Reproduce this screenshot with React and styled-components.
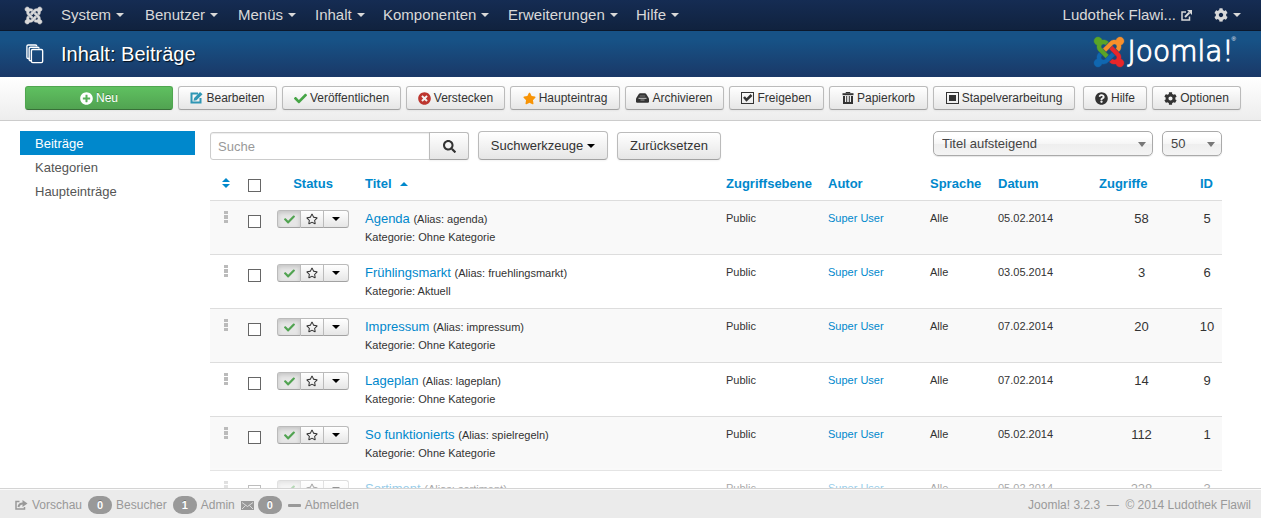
import React from "react";
import styled, { createGlobalStyle, css } from "styled-components";
import {
  FaCheck,
  FaCog,
  FaPlusCircle,
  FaQuestionCircle,
  FaRegStar,
  FaSearch,
  FaStar,
  FaTimesCircle,
} from "react-icons/fa";

const GlobalStyle = createGlobalStyle`
  *, *::before, *::after { box-sizing: border-box; }
  body {
    margin: 0;
    font: 13px/18px "Liberation Sans", Arial, sans-serif;
    color: #333;
    background: #fff;
  }
  a { color: #08c; text-decoration: none; }
  button, input, select { font: inherit; color: inherit; margin: 0; }
  svg { display: block; flex: none; }
`;

const Shell = styled.div`
  display: flex;
  flex-direction: column;
  height: 100vh;
`;

/* ---------- top navigation ---------- */

const NavBar = styled.nav`
  display: flex;
  align-items: center;
  flex: none;
  height: 31px;
  padding: 0 20px 0 25px;
  background: linear-gradient(#152c53, #10223e);
  border-bottom: 1px solid #0b182c;
  font-size: 15px;
  color: #d9d9d9;
`;

const NavHome = styled.a`
  display: flex;
  width: 36px;
  color: #d9d9d9;
`;

const NavItem = styled.a`
  display: flex;
  align-items: center;
  flex: 0 0 ${(p) => p.$width}px;
  gap: 5px;
  color: #d9d9d9;
  white-space: nowrap;
`;

const NavRight = styled.div`
  display: flex;
  align-items: center;
  gap: 22px;
  margin-left: auto;
`;

const NavLink = styled.a`
  display: flex;
  align-items: center;
  gap: 5px;
  color: #d9d9d9;
  white-space: nowrap;
`;

const Caret = styled.span`
  flex: none;
  border: 4px solid transparent;
  border-top-color: currentColor;
  border-bottom: 0;
`;

/* ---------- page header ---------- */

const Header = styled.header`
  display: flex;
  align-items: center;
  justify-content: space-between;
  flex: none;
  height: 46px;
  padding: 0 25px 0 26px;
  background: linear-gradient(#175286 20%, #1a3867);
  color: #fff;
`;

const PageTitle = styled.h1`
  display: flex;
  align-items: center;
  gap: 17px;
  margin: 0;
  font-size: 20px;
  font-weight: 400;
  line-height: 24px;
  text-shadow: 1px 1px 1px rgba(0, 0, 0, 0.8);
`;

const Brand = styled.div`
  display: flex;
  align-items: center;
  gap: 4px;
  height: 40px;
  padding-bottom: 5px;
  font: 200 28px/30px "DejaVu Sans Light", "DejaVu Sans", sans-serif;
  -webkit-text-stroke: 1px #fff;
`;

const Registered = styled.sup`
  align-self: flex-start;
  margin-left: -6px;
  font: 6px/10px "Liberation Sans", sans-serif;
  -webkit-text-stroke: 0;
`;

/* ---------- toolbar ---------- */

const Toolbar = styled.div`
  display: flex;
  align-items: center;
  flex: none;
  gap: 5px;
  height: 44px;
  padding: 0 20px 1px 25px;
  background: linear-gradient(#fff, #ededed);
  border-bottom: 1px solid #ccc;
`;

const buttonFace = css`
  display: flex;
  align-items: center;
  justify-content: center;
  padding: 0;
  color: #333;
  background: linear-gradient(#fff, #e6e6e6);
  border: 1px solid #bbb;
  border-bottom-color: #a2a2a2;
  white-space: nowrap;
`;

const ToolButton = styled.button`
  ${buttonFace}
  flex: 0 0 ${(p) => p.$width}px;
  gap: 3px;
  height: 24px;
  font-size: 12px;
  border-radius: 3px;
  box-shadow: 0 1px 2px rgba(0, 0, 0, 0.05);
  margin-left: ${(p) => (p.$apart ? 3 : 0)}px;
  ${(p) =>
    p.$primary &&
    css`
      color: #fff;
      background: linear-gradient(#5fc060, #51a351);
      border-color: #4fa64f #4fa64f #387038;
      text-shadow: 0 -1px 0 rgba(0, 0, 0, 0.25);
    `}
  svg { color: ${(p) => p.$icon}; }
`;

/* ---------- body ---------- */

const Main = styled.main`
  display: flex;
  align-items: flex-start;
  flex: 1;
  gap: 15px;
  min-height: 0;
  overflow: auto;
  scrollbar-width: none;
  padding: 10px 39px 0 20px;
`;

const SideMenu = styled.nav`
  display: flex;
  flex-direction: column;
  flex: 0 0 175px;
`;

const SideLink = styled.a`
  padding: 4px 15px 2px;
  color: ${(p) => (p.$active ? "#fff" : "#555")};
  background: ${(p) => (p.$active ? "#08c" : "transparent")};
`;

const Content = styled.section`
  flex: 1;
  min-width: 0;
`;

const Filters = styled.form`
  display: flex;
  align-items: flex-start;
  gap: 9px;
  height: 29px;
  margin-bottom: 6px;
`;

const SearchGroup = styled.div`
  display: flex;
  align-self: flex-end;
`;

const SearchInput = styled.input`
  width: 220px;
  height: 28px;
  padding: 0 7px;
  border: 1px solid #ccc;
  border-radius: 3px 0 0 3px;
  box-shadow: inset 0 1px 1px rgba(0, 0, 0, 0.075);
  background: #fff;
  &::placeholder { color: #999; }
`;

const FilterButton = styled.button`
  ${buttonFace}
  align-self: flex-end;
  gap: 4px;
  width: ${(p) => p.$width}px;
  height: ${(p) => (p.$tall ? 29 : 28)}px;
  border-radius: ${(p) => (p.$attached ? "0 3px 3px 0" : "4px")};
  margin-left: ${(p) => (p.$attached ? -1 : 0)}px;
  box-shadow: 0 1px 2px rgba(0, 0, 0, 0.05);
`;

const CaretDark = styled(Caret)`
  color: #000;
`;

const Picker = styled.div`
  position: relative;
  width: ${(p) => p.$width}px;
  margin-left: ${(p) => (p.$push ? "auto" : "0")};
`;

const PickerSelect = styled.select`
  appearance: none;
  display: block;
  width: 100%;
  height: 25px;
  padding: 1px 8px 0;
  color: #444;
  border: 1px solid #aaa;
  border-radius: 5px;
  background: linear-gradient(#fff 20%, #f6f6f6 50%, #eee 52%, #f4f4f4);
  box-shadow: 0 1px 1px rgba(0, 0, 0, 0.1);
`;

const PickerCaret = styled(Caret)`
  position: absolute;
  top: 11px;
  right: 7px;
  color: #777;
  border-width: 5px 4px 0;
  pointer-events: none;
`;

/* ---------- article table ---------- */

const Table = styled.table`
  width: 100%;
  table-layout: fixed;
  border-collapse: separate;
  border-spacing: 0;
`;

const Col = styled.col`
  width: ${(p) => (p.$width ? `${p.$width}px` : "auto")};
`;

const Th = styled.th`
  padding: 8px 8px 6px;
  height: 34px;
  color: #08c;
  line-height: 20px;
  text-align: ${(p) => (p.$center ? "center" : "left")};
  vertical-align: top;
  white-space: nowrap;
`;

const Td = styled.td`
  padding: ${(p) => (p.$small ? "8px" : "9px")} ${(p) => (p.$center ? 0 : 8)}px 6px;
  height: 54px;
  border-top: 1px solid #ddd;
  text-align: ${(p) => (p.$center ? "center" : "left")};
  vertical-align: top;
  font-size: ${(p) => (p.$small ? 11 : 13)}px;
`;

const Row = styled.tr`
  &:nth-child(odd) ${Td} { background: #f9f9f9; }
`;

const SortLink = styled.a`
  display: inline-flex;
  align-items: center;
  gap: 8px;
`;

const SortUp = styled.span`
  border: 4px solid transparent;
  border-bottom-color: #08c;
  border-top: 0;
`;

const CenterIcon = styled.span`
  display: flex;
  justify-content: center;
  padding-top: ${(p) => p.$top}px;
`;

const Tick = styled.input`
  appearance: none;
  display: block;
  width: 13px;
  height: 13px;
  border: 1px solid #666;
  background: #fff;
  && { margin: 5px 0 0 -2px; }
`;

const StatusGroup = styled.div`
  display: flex;
  width: 72px;
`;

const StatusButton = styled.button`
  ${buttonFace}
  flex: 0 0 ${(p) => p.$width}px;
  height: 18px;
  & + & { border-left: 0; }
  &:first-child { border-radius: 3px 0 0 3px; }
  &:last-child { border-radius: 0 3px 3px 0; }
  ${(p) =>
    p.$pressed &&
    css`
      color: #51a351;
      background: #e6e6e6;
      box-shadow: inset 0 2px 4px rgba(0, 0, 0, 0.15);
    `}
`;

const Alias = styled.span`
  font-size: 11px;
`;

const Category = styled.div`
  font-size: 11px;
`;

/* ---------- status bar ---------- */

const StatusBar = styled.footer`
  position: relative;
  display: flex;
  align-items: center;
  flex: none;
  height: 30px;
  padding: 3px 10px 0 15px;
  font-size: 12px;
  color: #999;
  background: #ebebeb;
  border-top: 1px solid #d4d4d4;
  box-shadow: inset 0 1px 0 rgba(255, 255, 255, 0.8),
    0 -15px 15px rgba(255, 255, 255, 0.6);
  white-space: nowrap;
`;

const StatusItem = styled.span`
  display: flex;
  align-items: center;
  gap: 4px;
  margin-right: 6px;
`;

const StatusLink = styled(StatusItem)`
  color: #999;
`;

const Badge = styled.span`
  width: 24px;
  height: 18px;
  border-radius: 9px;
  background: #999;
  color: #fff;
  font-weight: 700;
  font-size: 11px;
  text-align: center;
  text-shadow: 0 -1px 0 rgba(0, 0, 0, 0.25);
`;

const Copyright = styled.span`
  margin-left: auto;
`;

/* ---------- drawings ---------- */

const ARM =
  "M16.719 14.759L14.22 17.26l-2.37 2.37-.462.466c-1.368 1.365-3.297 1.83-5.047 1.397-.327 1.424-1.604 2.49-3.13 2.49C1.438 23.983 0 22.547 0 20.772c0-1.518 1.055-2.789 2.469-3.123-.446-1.76.016-3.705 1.396-5.08l.179-.18 2.37 2.37-.184.181c-.769.779-.769 2.024 0 2.789.771.78 2.022.78 2.787 0l.465-.465 2.367-2.371 2.502-2.506z";

function JoomlaMark({ size, colors, weight }) {
  return (
    <svg width={size} height={size} viewBox="0 0 24 24" strokeWidth={weight} overflow="visible" aria-hidden="true">
      {colors.map((c, i) => (
        <path key={i} d={ARM} fill={c} stroke={c} transform={`rotate(${i * 90} 12 12)`} />
      ))}
    </svg>
  );
}

const StackIcon = () => (
  <svg width="18" height="20" viewBox="0 0 20 22" fill="none" stroke="#fff" strokeWidth="1.500">
    <path d="M4 16H2.500Q1 16 1 14.500V2.500Q1 1 2.500 1H10.500Q12 1 12 2.500" />
    <path d="M6 18.500H5Q3.500 18.500 3.500 17V5Q3.500 3.500 5 3.500H13Q14.500 3.500 14.500 5" />
    <rect x="6" y="6" width="12.500" height="14.500" rx="1.500" />
  </svg>
);

const ExternalIcon = () => (
  <svg width="11" height="11" viewBox="0 0 11 11" fill="none" stroke="currentColor" strokeWidth="1.500">
    <path d="M5 2H1V10H8.500V6.500" />
    <path d="M4 7L8.500 2.500" strokeWidth="2" />
    <path d="M6 0H11V5Z" fill="currentColor" stroke="none" />
  </svg>
);

const EditIcon = () => (
  <svg width="13" height="12" viewBox="0 0 13 12" fill="none">
    <path d="M8 1.500H1.500V10.500H10.500V6" stroke="currentColor" strokeWidth="2" />
    <path d="M3.500 8.800L4.200 6L10 0L12.500 2.300L6.500 8.200Z" fill="currentColor" />
  </svg>
);

const DrawerIcon = () => (
  <svg width="13" height="10" viewBox="0 0 13 10">
    <path d="M0 5.500L2.800 1Q3.300 .3 4.200 .3H8.800Q9.700 .3 10.200 1L13 5.500V8.500Q13 9.700 11.800 9.700H1.200Q0 9.700 0 8.500Z" fill="currentColor" />
    <path d="M2.500 5.300H10.500" stroke="#ccc" fill="none" />
    <path d="M3.800 3H9.200" stroke="#777" fill="none" />
    <path d="M4.500 7H8.500" stroke="#999" />
  </svg>
);

const CheckBoxIcon = () => (
  <svg width="13" height="12" viewBox="0 0 13 12" fill="none" stroke="currentColor">
    <rect x=".5" y=".5" width="12" height="11" />
    <path d="M3 5L5.500 8L10.500 3" strokeWidth="2.500" />
  </svg>
);

const TrashIcon = () => (
  <svg width="12" height="12" viewBox="0 0 12 12" fill="none" stroke="currentColor">
    <path d="M.5 2.200H11.500" strokeWidth="2" />
    <path d="M4 1V.5H8V1" />
    <path d="M2 4V11H10V4" strokeWidth="2" />
    <path d="M4.700 4V10M7.300 4V10" strokeWidth="1" />
  </svg>
);

const BatchIcon = () => (
  <svg width="13" height="12" viewBox="0 0 13 12">
    <rect x=".5" y=".5" width="12" height="11" fill="none" stroke="currentColor" />
    <rect x="3" y="3" width="7" height="6" fill="currentColor" />
  </svg>
);

const DragIcon = () => (
  <svg width="4" height="12" viewBox="0 0 4 12" fill="#bbb">
    <path d="M0 0H4V3H0ZM0 4H4V8H0ZM0 9H4V12H0Z" />
  </svg>
);

const OrderIcon = () => (
  <svg width="8" height="10" viewBox="0 0 8 10" fill="#08c">
    <path d="M0 4L4 0L8 4ZM0 6H8L4 10Z" />
  </svg>
);

const ShareIcon = () => (
  <svg width="13" height="10" viewBox="0 0 13 10" fill="none" stroke="#999">
    <path d="M4.500 1.500H1V9H9.500V7" strokeWidth="1.500" />
    <path d="M3.500 7Q4 3.500 8 3.500" strokeWidth="2" />
    <path d="M7.500 0L12.500 3.500L7.500 7Z" fill="#999" stroke="none" />
  </svg>
);

const MailIcon = () => (
  <svg width="13" height="9" viewBox="0 0 13 9">
    <rect width="13" height="9" fill="#999" />
    <path d="M1 1.500L6.500 5.500L12 1.500M1 8L4.500 4.500M12 8L8.500 4.500" fill="none" stroke="#ebebeb" strokeWidth=".8" />
  </svg>
);

const MinusIcon = () => (
  <svg width="13" height="3" viewBox="0 0 13 3">
    <rect width="13" height="3" rx="1" fill="#999" />
  </svg>
);

/* ---------- data ---------- */

const MENU = [
  ["System", 84],
  ["Benutzer", 93],
  ["Menüs", 77],
  ["Inhalt", 68],
  ["Komponenten", 125],
  ["Erweiterungen", 128],
  ["Hilfe", 62],
];

const TOOLS = [
  { label: "Neu", width: 148, icon: <FaPlusCircle size={13} />, color: "#fff", primary: true },
  { label: "Bearbeiten", width: 99, icon: <EditIcon />, color: "#2f96b4" },
  { label: "Veröffentlichen", width: 119, icon: <FaCheck size={13} />, color: "#46a546" },
  { label: "Verstecken", width: 99, icon: <FaTimesCircle size={13} />, color: "#bd362f" },
  { label: "Haupteintrag", width: 110, icon: <FaStar size={13} />, color: "#f89406" },
  { label: "Archivieren", width: 99, icon: <DrawerIcon />, color: "#333" },
  { label: "Freigeben", width: 95, icon: <CheckBoxIcon />, color: "#333" },
  { label: "Papierkorb", width: 99, icon: <TrashIcon />, color: "#333" },
  { label: "Stapelverarbeitung", width: 142, icon: <BatchIcon />, color: "#333" },
  { label: "Hilfe", width: 64, icon: <FaQuestionCircle size={13} />, color: "#333", apart: true },
  { label: "Optionen", width: 89, icon: <FaCog size={13} />, color: "#333" },
];

const ARTICLES = [
  { title: "Agenda", alias: "agenda", category: "Ohne Kategorie", date: "05.02.2014", hits: 58, id: 5 },
  { title: "Frühlingsmarkt", alias: "fruehlingsmarkt", category: "Aktuell", date: "03.05.2014", hits: 3, id: 6 },
  { title: "Impressum", alias: "impressum", category: "Ohne Kategorie", date: "07.02.2014", hits: 20, id: 10 },
  { title: "Lageplan", alias: "lageplan", category: "Ohne Kategorie", date: "07.02.2014", hits: 14, id: 9 },
  { title: "So funktionierts", alias: "spielregeln", category: "Ohne Kategorie", date: "05.02.2014", hits: 112, id: 1 },
  { title: "Sortiment", alias: "sortiment", category: "Ohne Kategorie", date: "05.02.2014", hits: 228, id: 3 },
];

const COLUMNS = [32, 27, 88, null, 102, 102, 68, 101, 101, 30];

const LIGHT = ["#d9d9d9", "#d9d9d9", "#d9d9d9", "#d9d9d9"];
const BRAND = ["#1067b0", "#5aa426", "#f9902a", "#e8262a"];

function ArticleRow({ article }) {
  return (
    <Row>
      <Td>
        <CenterIcon $top={1}><DragIcon /></CenterIcon>
      </Td>
      <Td>
        <Tick type="checkbox" aria-label={`${article.title} auswählen`} />
      </Td>
      <Td>
        <StatusGroup>
          <StatusButton type="button" $width={24} $pressed aria-label="Veröffentlicht"><FaCheck size={11} /></StatusButton>
          <StatusButton type="button" $width={23} aria-label="Haupteintrag"><FaRegStar size={12} /></StatusButton>
          <StatusButton type="button" $width={25} aria-label="Aktionen"><CaretDark /></StatusButton>
        </StatusGroup>
      </Td>
      <Td>
        <a href="#artikel">{article.title}</a> <Alias>(Alias: {article.alias})</Alias>
        <Category>Kategorie: {article.category}</Category>
      </Td>
      <Td $small>Public</Td>
      <Td $small><a href="#autor">Super User</a></Td>
      <Td $small>Alle</Td>
      <Td $small>{article.date}</Td>
      <Td $center>{article.hits}</Td>
      <Td $center>{article.id}</Td>
    </Row>
  );
}

export default function App() {
  return (
    <Shell>
      <GlobalStyle />
      <NavBar>
        <NavHome href="#home" aria-label="Joomla"><JoomlaMark size={17} colors={LIGHT} weight={0.8} /></NavHome>
        {MENU.map(([label, width]) => (
          <NavItem key={label} href="#menu" $width={width}>{label}<Caret /></NavItem>
        ))}
        <NavRight>
          <NavLink href="#site">Ludothek Flawi...<ExternalIcon /></NavLink>
          <NavLink href="#konto" aria-label="Konto"><FaCog size={14} /><Caret /></NavLink>
        </NavRight>
      </NavBar>

      <Header>
        <PageTitle><StackIcon />Inhalt: Beiträge</PageTitle>
        <Brand>
          <JoomlaMark size={30} colors={BRAND} weight={0.3} />
          Joomla!
          <Registered>®</Registered>
        </Brand>
      </Header>

      <Toolbar>
        {TOOLS.map((t) => (
          <ToolButton key={t.label} type="button" $width={t.width} $icon={t.color} $primary={t.primary} $apart={t.apart}>
            {t.icon}{t.label}
          </ToolButton>
        ))}
      </Toolbar>

      <Main>
        <SideMenu>
          <SideLink href="#beitraege" $active>Beiträge</SideLink>
          <SideLink href="#kategorien">Kategorien</SideLink>
          <SideLink href="#haupteintraege">Haupteinträge</SideLink>
        </SideMenu>

        <Content>
          <Filters onSubmit={(e) => e.preventDefault()}>
            <SearchGroup>
              <SearchInput type="text" placeholder="Suche" aria-label="Suche" />
              <FilterButton type="submit" $width={40} $attached aria-label="Suchen"><FaSearch size={13} /></FilterButton>
            </SearchGroup>
            <FilterButton type="button" $width={130} $tall>Suchwerkzeuge<CaretDark /></FilterButton>
            <FilterButton type="button" $width={104}>Zurücksetzen</FilterButton>
            <Picker $width={220} $push>
              <PickerSelect aria-label="Sortierung"><option>Titel aufsteigend</option></PickerSelect>
              <PickerCaret />
            </Picker>
            <Picker $width={60}>
              <PickerSelect aria-label="Anzahl"><option>50</option></PickerSelect>
              <PickerCaret />
            </Picker>
          </Filters>

          <Table>
            <colgroup>
              {COLUMNS.map((w, i) => <Col key={i} $width={w} />)}
            </colgroup>
            <thead>
              <tr>
                <Th><a href="#ordnung" aria-label="Reihenfolge"><CenterIcon $top={4}><OrderIcon /></CenterIcon></a></Th>
                <Th><Tick type="checkbox" aria-label="Alle auswählen" /></Th>
                <Th $center><a href="#status">Status</a></Th>
                <Th><SortLink href="#titel">Titel<SortUp /></SortLink></Th>
                <Th><a href="#zugriffsebene">Zugriffsebene</a></Th>
                <Th><a href="#autor">Autor</a></Th>
                <Th><a href="#sprache">Sprache</a></Th>
                <Th><a href="#datum">Datum</a></Th>
                <Th><a href="#zugriffe">Zugriffe</a></Th>
                <Th><a href="#id">ID</a></Th>
              </tr>
            </thead>
            <tbody>
              {ARTICLES.map((a) => <ArticleRow key={a.id} article={a} />)}
            </tbody>
          </Table>
        </Content>
      </Main>

      <StatusBar>
        <StatusLink as="a" href="#vorschau"><ShareIcon />Vorschau</StatusLink>
        <StatusItem><Badge>0</Badge>Besucher</StatusItem>
        <StatusItem><Badge>1</Badge>Admin</StatusItem>
        <StatusItem><MailIcon /><Badge>0</Badge></StatusItem>
        <StatusLink as="a" href="#abmelden"><MinusIcon />Abmelden</StatusLink>
        <Copyright>Joomla! 3.2.3 &nbsp;—&nbsp; © 2014 Ludothek Flawil</Copyright>
      </StatusBar>
    </Shell>
  );
}
